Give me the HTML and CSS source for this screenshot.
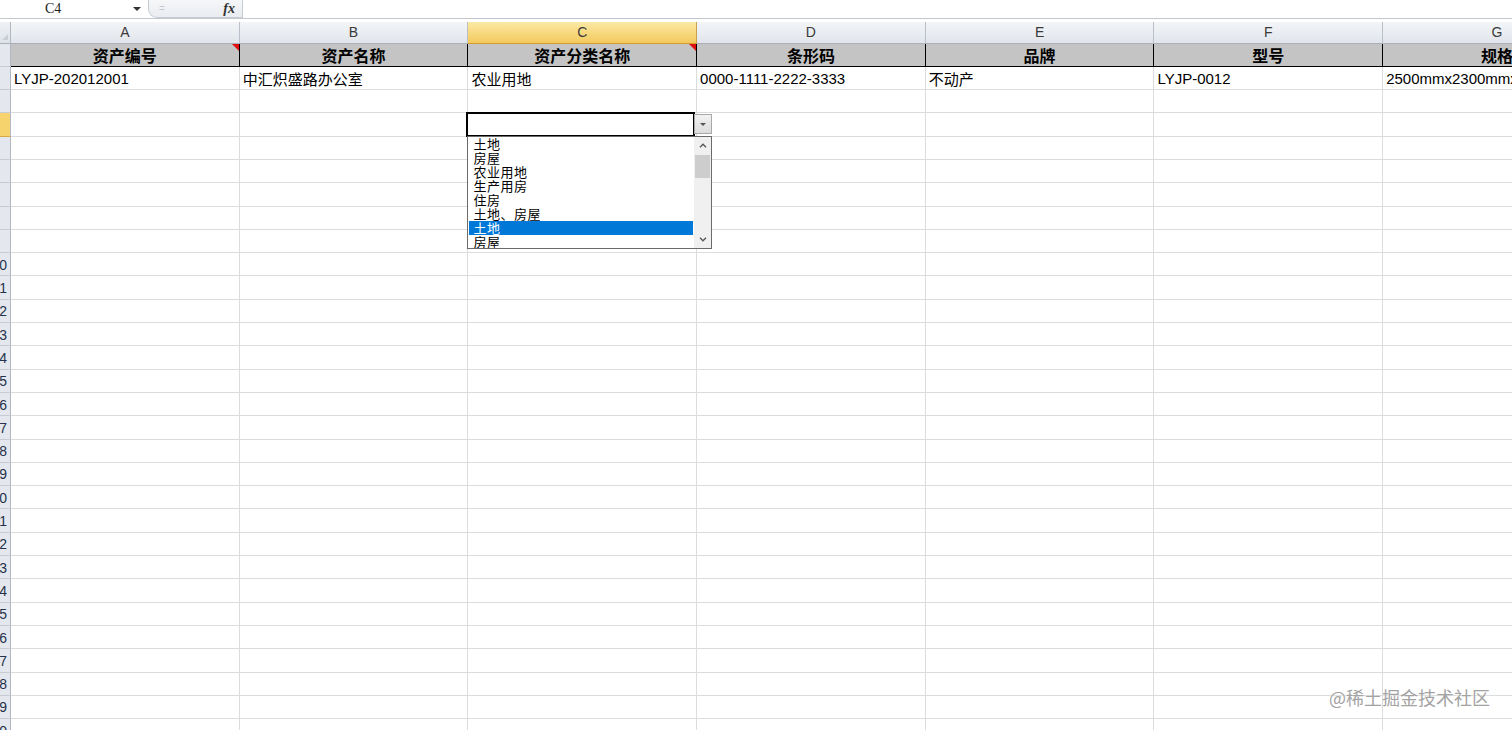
FILE: index.html
```html
<!DOCTYPE html>
<html>
<head>
    <meta charset="utf-8">
    <title>资产导入模板</title>
    <link rel="stylesheet" href="styles.css">
</head>
<body>
    <div class="formula-bar">
        <div class="name-box">C4<span class="name-arrow"></span></div>
        <div class="fx-box"><span class="fx-mark">=</span><span class="fx">fx</span></div>
        <div class="formula-input"></div>
    </div>

    <div class="sheet" id="sheet">
        <div class="corner"></div>
        <div class="col-head">A</div>
        <div class="col-head">B</div>
        <div class="col-head active">C</div>
        <div class="col-head">D</div>
        <div class="col-head">E</div>
        <div class="col-head">F</div>
        <div class="col-head">G</div>

        <div class="row-head"></div>
        <div class="cell title note">资产编号</div>
        <div class="cell title">资产名称</div>
        <div class="cell title note">资产分类名称</div>
        <div class="cell title">条形码</div>
        <div class="cell title">品牌</div>
        <div class="cell title">型号</div>
        <div class="cell title">规格</div>

        <div class="row-head"></div>
        <div class="cell">LYJP-202012001</div>
        <div class="cell">中汇炽盛路办公室</div>
        <div class="cell">农业用地</div>
        <div class="cell">0000-1111-2222-3333</div>
        <div class="cell">不动产</div>
        <div class="cell">LYJP-0012</div>
        <div class="cell">2500mmx2300mmx1200mm</div>
    </div>

    <div class="validation" id="validation">
        <div class="drop-btn"><span class="drop-arrow"></span></div>
        <div class="drop-list">
            <ul class="options">
                <li>土地</li>
                <li>房屋</li>
                <li>农业用地</li>
                <li>生产用房</li>
                <li>住房</li>
                <li>土地、房屋</li>
                <li class="picked">土地</li>
                <li>房屋</li>
            </ul>
            <div class="scrollbar">
                <div class="scroll-btn">
                    <svg width="8" height="5" viewBox="0 0 8 5"><path d="M1 4.2 L4 1.2 L7 4.2" fill="none" stroke="#555" stroke-width="1.3"/></svg>
                </div>
                <div class="scroll-thumb"></div>
                <div class="scroll-track"></div>
                <div class="scroll-btn">
                    <svg width="8" height="5" viewBox="0 0 8 5"><path d="M1 0.8 L4 3.8 L7 0.8" fill="none" stroke="#555" stroke-width="1.3"/></svg>
                </div>
            </div>
        </div>
    </div>

    <div class="watermark">@稀土掘金技术社区</div>

    <script>
        const sheet = document.getElementById('sheet');
        const validation = document.getElementById('validation');

        // empty rows 3..30, C4 is the active cell with the list validation
        for (let r = 3; r <= 30; r++) {
            const head = document.createElement('div');
            head.className = r === 4 ? 'row-head active' : 'row-head';
            head.textContent = r >= 10 ? r : '';
            sheet.appendChild(head);

            for (let c = 0; c < 7; c++) {
                const cell = document.createElement('div');
                cell.className = 'cell';
                if (r === 4 && c === 2) {
                    cell.classList.add('selected');
                    cell.appendChild(validation);
                }
                sheet.appendChild(cell);
            }
        }
    </script>
</body>
</html>
```

FILE: styles.css
```css
html, body {
    margin: 0;
    height: 100%;
    overflow: hidden;
}
body {
    position: relative;
    background: #fff;
    font-family: "Liberation Sans", "Noto Sans CJK SC", sans-serif;
    color: #000;
}

/* formula bar */
.formula-bar {
    display: flex;
    height: 18px;
    border-bottom: 1px solid #c3c8ce;
    margin-bottom: 3px;
}
.name-box {
    width: 148px;
    box-sizing: border-box;
    display: flex;
    align-items: center;
    justify-content: space-between;
    padding: 0 7px 0 45px;
    font-family: "Liberation Serif", serif;
    font-size: 14px;
    color: #222;
}
.name-arrow {
    width: 0;
    height: 0;
    border-left: 4px solid transparent;
    border-right: 4px solid transparent;
    border-top: 4px solid #333;
}
.fx-box {
    width: 95px;
    box-sizing: border-box;
    display: flex;
    align-items: center;
    justify-content: space-between;
    padding: 0 7px 0 10px;
    background: linear-gradient(#f6f7f9, #e9ecf0);
    border: 1px solid #c7cbd1;
    border-top: none;
    border-radius: 0 0 0 9px;
}
.fx-mark {
    font-size: 10px;
    color: #c4c8cd;
}
.fx {
    font-family: "Liberation Serif", serif;
    font-style: italic;
    font-weight: bold;
    font-size: 14px;
    color: #333;
}
.formula-input {
    flex: 1;
}

/* grid */
.sheet {
    display: grid;
    grid-template-columns: 11px repeat(7, 228.7px);
    grid-template-rows: 21.5px;
    grid-auto-rows: 23.3px;
}
.corner {
    position: relative;
    background: linear-gradient(#eef1f5, #dfe3e9);
    border-right: 1px solid #b1b8c2;
    border-bottom: 1px solid #a9b0ba;
}
.corner::after {
    content: "";
    position: absolute;
    right: 2px;
    bottom: 3px;
    border-left: 6px solid transparent;
    border-bottom: 6px solid #c9ced5;
}
.col-head {
    display: flex;
    align-items: center;
    justify-content: center;
    background: linear-gradient(#f3f5f8, #e1e5eb);
    border-right: 1px solid #b9bfc8;
    border-bottom: 1px solid #a9b0ba;
    font-size: 14px;
    color: #3a3a3a;
}
.col-head.active {
    background: linear-gradient(#fbe9a4, #f3c95c);
    border-right-color: #c8a04e;
    border-bottom-color: #d49b2e;
}
.row-head {
    display: flex;
    align-items: center;
    justify-content: flex-end;
    padding: 1px 3px 0 0;
    overflow: hidden;
    background: #e4e8ee;
    border-right: 1px solid #b1b8c2;
    border-bottom: 1px solid #c7ccd3;
    font-size: 14px;
    color: #24324b;
}
.row-head.active {
    background: #f7d36d;
    border-bottom-color: #d6aa44;
}
.cell {
    display: flex;
    align-items: center;
    padding: 2px 3px 0;
    overflow: hidden;
    white-space: nowrap;
    border-right: 1px solid #dadcdd;
    border-bottom: 1px solid #dadcdd;
    font-size: 15px;
}
.cell.title {
    position: relative;
    justify-content: center;
    padding: 0;
    background: #c4c4c4;
    border-right-color: #000;
    border-bottom-color: #000;
    font-weight: bold;
    font-size: 16px;
}
.cell.note::after {
    content: "";
    position: absolute;
    top: 0;
    right: 0;
    border-top: 7px solid #e01010;
    border-left: 7px solid transparent;
}
.cell.selected {
    position: relative;
    overflow: visible;
}
.cell.selected::before {
    content: "";
    position: absolute;
    top: -1px;
    left: -2px;
    right: 1px;
    bottom: -1px;
    border: 2px solid #000;
}

/* data validation dropdown */
.validation {
    position: absolute;
    top: 0;
    left: 0;
    z-index: 5;
}
.drop-btn {
    position: absolute;
    top: 1px;
    left: 226px;
    width: 18px;
    height: 20px;
    box-sizing: border-box;
    display: flex;
    align-items: center;
    justify-content: center;
    background: linear-gradient(#f2f2f2, #dcdcdc);
    border: 1px solid #a8a8a8;
}
.drop-arrow {
    width: 0;
    height: 0;
    border-left: 3px solid transparent;
    border-right: 3px solid transparent;
    border-top: 3px solid #555;
}
.drop-list {
    position: absolute;
    top: 23px;
    left: -1px;
    width: 245px;
    height: 113px;
    box-sizing: border-box;
    display: flex;
    background: #fff;
    border: 1px solid #6b6b6b;
}
.options {
    flex: 1;
    margin: 0;
    padding: 0 1px;
    list-style: none;
    overflow: hidden;
    font-family: "Noto Sans CJK SC", sans-serif;
    font-size: 13px;
    line-height: 14px;
    letter-spacing: 0.5px;
}
.options li {
    height: 14px;
    padding-left: 4px;
    white-space: nowrap;
}
.options li.picked {
    background: #0078d7;
    color: #fff;
}
.scrollbar {
    width: 17px;
    display: flex;
    flex-direction: column;
    background: #f0f0f0;
}
.scroll-btn {
    height: 17px;
    display: flex;
    align-items: center;
    justify-content: center;
}
.scroll-thumb {
    height: 23px;
    margin: 1px 1px 0;
    background: #cdcdcd;
}
.scroll-track {
    flex: 1;
}

.watermark {
    position: absolute;
    right: 22px;
    bottom: 20px;
    font-family: "Noto Sans CJK SC", sans-serif;
    font-size: 18px;
    color: #a3a3a3;
    text-shadow: 0 0 2px #fff;
}
```
